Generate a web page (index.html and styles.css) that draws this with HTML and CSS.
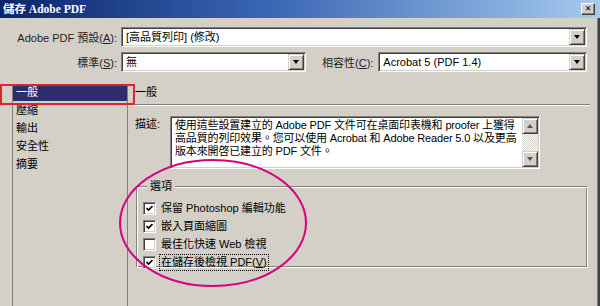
FILE: index.html
```html
<!DOCTYPE html>
<html lang="zh-Hant">
<head>
<meta charset="utf-8">
<title>儲存 Adobe PDF</title>
<link rel="stylesheet" href="styles.css">
</head>
<body>
<div class="dialog">
  <div class="titlebar">
    <span class="title">儲存 Adobe PDF</span>
    <span class="close">✕</span>
  </div>
  <div class="body">
    <div class="top">
      <div class="row">
        <span class="lbl lbl-wide">Adobe PDF 預設(<u>A</u>):</span>
        <div class="select sel-grow"><span class="val">[高品質列印] (修改)</span><span class="drop"><i class="tri"></i></span></div>
      </div>
      <div class="row">
        <span class="lbl lbl-wide">標準(<u>S</u>):</span>
        <div class="select sel-std"><span class="val">無</span><span class="drop"><i class="tri"></i></span></div>
        <span class="lbl lbl-compat">相容性(<u>C</u>):</span>
        <div class="select sel-grow"><span class="val">Acrobat 5 (PDF 1.4)</span><span class="drop"><i class="tri"></i></span></div>
      </div>
    </div>
    <div class="main">
      <ul class="nav">
        <li class="nav-item active">一般</li>
        <li class="nav-item">壓縮</li>
        <li class="nav-item">輸出</li>
        <li class="nav-item">安全性</li>
        <li class="nav-item">摘要</li>
      </ul>
      <div class="panel">
        <div class="panel-head">一般</div>
        <div class="sep"></div>
        <div class="desc-row">
          <span class="desc-lbl">描述:</span>
          <div class="desc-box">
            <div class="desc-text">使用這些設置建立的 Adobe PDF 文件可在桌面印表機和 proofer 上獲得<br>高品質的列印效果。您可以使用 Acrobat 和 Adobe Reader 5.0 以及更高<br>版本來開啓已建立的 PDF 文件。</div>
            <div class="scroll">
              <span class="sbtn"><i class="tri-up"></i></span>
              <span class="track"></span>
              <span class="sbtn"><i class="tri"></i></span>
            </div>
          </div>
        </div>
        <div class="group">
          <span class="legend">選項</span>
          <div class="opt"><span class="cb checked"><svg viewBox="0 0 7 7" width="7" height="7"><path d="M0.5 3 L2.5 5 L6.5 1" fill="none" stroke="#000" stroke-width="1.7"/></svg></span><span class="opt-lbl">保留 Photoshop 編輯功能</span></div>
          <div class="opt"><span class="cb checked"><svg viewBox="0 0 7 7" width="7" height="7"><path d="M0.5 3 L2.5 5 L6.5 1" fill="none" stroke="#000" stroke-width="1.7"/></svg></span><span class="opt-lbl">嵌入頁面縮圖</span></div>
          <div class="opt"><span class="cb"></span><span class="opt-lbl">最佳化快速 Web 檢視</span></div>
          <div class="opt"><span class="cb checked"><svg viewBox="0 0 7 7" width="7" height="7"><path d="M0.5 3 L2.5 5 L6.5 1" fill="none" stroke="#000" stroke-width="1.7"/></svg></span><span class="opt-lbl focus">在儲存後檢視 PDF(<u>V</u>)</span></div>
        </div>
      </div>
    </div>
  </div>
  <svg class="mark" width="196" height="134" viewBox="0 0 196 134"><ellipse cx="97" cy="66" rx="93" ry="63" fill="none" stroke="#d6007e" stroke-width="2"/></svg>
</div>
</body>
</html>
```
FILE: styles.css
```css
* { box-sizing: border-box; }
html, body { margin: 0; padding: 0; }
body {
  width: 600px;
  height: 306px;
  overflow: hidden;
  background: #d4d0c8;
  font-family: "Liberation Sans", "Noto Sans CJK TC", sans-serif;
  font-size: 11px;
  color: #000;
}
.dialog {
  position: relative;
  width: 600px;
  height: 306px;
  display: flex;
  flex-direction: column;
  background: #d4d0c8;
}
.titlebar {
  height: 18px;
  flex: none;
  display: flex;
  align-items: center;
  padding: 0 5px 0 3px;
  background: linear-gradient(to right, #0a246a 0%, #3a67b4 45%, #a6caf0 100%);
}
.title {
  color: #fff;
  font-family: "Liberation Serif", "Noto Sans CJK TC", serif;
  font-weight: bold;
  font-size: 11.5px;
  line-height: 14px;
}
.close {
  margin-left: auto;
  width: 14px;
  height: 12px;
  background: #d4d0c8;
  border: 1px solid;
  border-color: #fff #404040 #404040 #fff;
  box-shadow: inset -1px -1px #808080;
  font-size: 8px;
  line-height: 10px;
  text-align: center;
  color: #000;
  font-family: "DejaVu Sans", sans-serif;
}
.body {
  flex: 1;
  display: flex;
  flex-direction: column;
  border-right: 2px solid #404040;
  box-shadow: inset -1px 0 #808080;
}
.top {
  padding: 9px 11px 0 0;
  display: flex;
  flex-direction: column;
  gap: 5px;
}
.row {
  display: flex;
  align-items: center;
  height: 20px;
}
.lbl { white-space: nowrap; color: #222; }
.lbl-wide {
  width: 117px;
  text-align: right;
  margin-right: 4px;
}
.lbl-compat {
  margin-left: 16px;
  margin-right: 5px;
}
.select {
  height: 20px;
  display: flex;
  align-items: center;
  background: #fff;
  border: 1px solid;
  border-color: #808080 #fff #fff #808080;
  box-shadow: inset 1px 1px #404040, inset -1px -1px #d4d0c8;
  padding: 1px;
}
.sel-grow { flex: 1; }
.sel-std { width: 185px; }
.val {
  flex: 1;
  padding-left: 3px;
  line-height: 16px;
  white-space: nowrap;
}
.drop {
  width: 16px;
  height: 16px;
  background: #d4d0c8;
  border: 1px solid;
  border-color: #d4d0c8 #404040 #404040 #d4d0c8;
  box-shadow: inset 1px 1px #fff, inset -1px -1px #808080;
  display: flex;
  align-items: center;
  justify-content: center;
}
.tri {
  display: block;
  width: 0;
  height: 0;
  border-left: 3.5px solid transparent;
  border-right: 3.5px solid transparent;
  border-top: 4px solid #000;
}
.tri-up {
  display: block;
  width: 0;
  height: 0;
  border-left: 3.5px solid transparent;
  border-right: 3.5px solid transparent;
  border-bottom: 4px solid #000;
}
.main {
  flex: 1;
  display: flex;
  margin-top: 12px;
}
.nav {
  list-style: none;
  margin: 0 0 0 12px;
  padding: 0;
  width: 116px;
  border-left: 1px solid #808080;
  border-right: 1px solid #808080;
}
.nav-item {
  height: 18px;
  line-height: 18px;
  padding-left: 3px;
}
.nav-item.active {
  position: relative;
  background: #2b2f6e;
  color: #fff;
  height: 17px;
  line-height: 17px;
}
.nav-item.active::after {
  content: "";
  position: absolute;
  left: -13px;
  top: 0;
  width: 131px;
  height: 17px;
  border: 2px solid #d82733;
}
.panel {
  flex: 1;
  margin-left: 5px;
  padding-right: 8px;
  display: flex;
  flex-direction: column;
}
.panel-head {
  height: 17px;
  line-height: 17px;
  padding-left: 2px;
}
.sep {
  margin-top: 3px;
  height: 2px;
  border-top: 1px solid #808080;
  border-bottom: 1px solid #fff;
}
.desc-row {
  display: flex;
  margin-top: 10px;
}
.desc-lbl {
  width: 37px;
  padding-left: 2px;
  padding-top: 2px;
  line-height: 13px;
}
.desc-box {
  width: 370px;
  height: 53px;
  display: flex;
  background: #fff;
  border: 1px solid;
  border-color: #808080 #fff #fff #808080;
  box-shadow: inset 1px 1px #404040, inset -1px -1px #d4d0c8;
  padding: 1px;
}
.desc-text {
  flex: 1;
  padding: 1px 0 0 3px;
  line-height: 13px;
  letter-spacing: -0.15px;
  white-space: nowrap;
  overflow: hidden;
}
.scroll {
  width: 16px;
  display: flex;
  flex-direction: column;
}
.sbtn {
  height: 16px;
  background: #d4d0c8;
  border: 1px solid;
  border-color: #d4d0c8 #404040 #404040 #d4d0c8;
  box-shadow: inset 1px 1px #fff, inset -1px -1px #808080;
  display: flex;
  align-items: center;
  justify-content: center;
}
.sbtn .tri, .sbtn .tri-up { border-top-color: #555; border-bottom-color: #555; }
.track {
  flex: 1;
  background: repeating-conic-gradient(#fff 0 25%, #d4d0c8 0 50%) 0 0 / 2px 2px;
}
.group {
  margin: 17px 2px 0 3px;
  height: 82px;
  border: 1px solid;
  border-color: #808080 #fff #fff #808080;
  box-shadow: inset 1px 1px #fff, inset -1px -1px #808080;
  padding: 0 6px;
}
.legend {
  display: inline-block;
  margin: -7px 0 0 4px;
  padding: 0 3px;
  height: 13px;
  line-height: 13px;
  background: #d4d0c8;
  vertical-align: top;
}
.opt {
  height: 18px;
  display: flex;
  align-items: center;
  gap: 5px;
}
.cb {
  width: 13px;
  height: 13px;
  background: #fff;
  border: 1px solid;
  border-color: #808080 #fff #fff #808080;
  box-shadow: inset 1px 1px #404040, inset -1px -1px #d4d0c8;
  display: flex;
  align-items: center;
  justify-content: center;
}
.cb svg { display: block; }
.opt-lbl {
  line-height: 13px;
  white-space: nowrap;
}
.opt-lbl.focus {
  outline: 1px dotted #000;
  outline-offset: 1px;
}
.mark {
  position: absolute;
  left: 116px;
  top: 157px;
}
```
